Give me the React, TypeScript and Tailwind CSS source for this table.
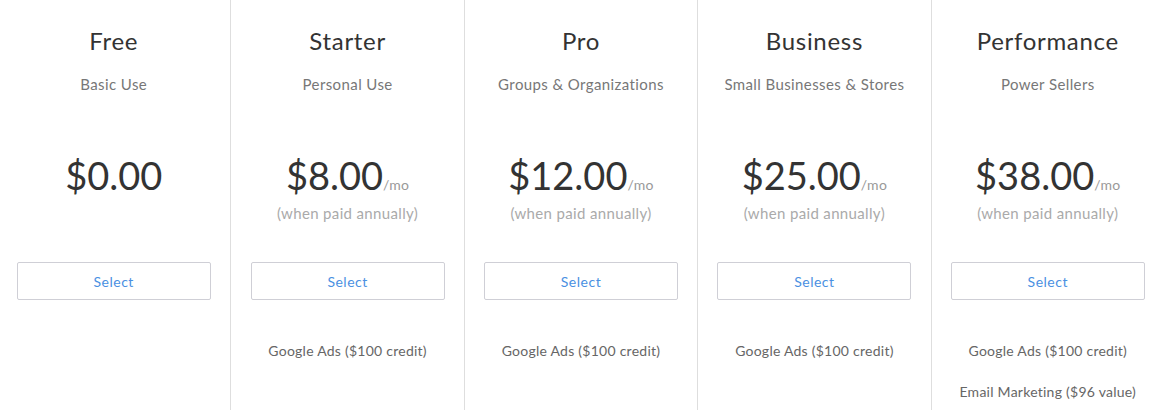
import React from 'react';

interface Plan {
  name: string;
  tagline: string;
  price: string;
  monthly: boolean;
  features: string[];
}

const plans: Plan[] = [
  { name: 'Free', tagline: 'Basic Use', price: '$0.00', monthly: false, features: [] },
  { name: 'Starter', tagline: 'Personal Use', price: '$8.00', monthly: true, features: ['Google Ads ($100 credit)'] },
  { name: 'Pro', tagline: 'Groups & Organizations', price: '$12.00', monthly: true, features: ['Google Ads ($100 credit)'] },
  { name: 'Business', tagline: 'Small Businesses & Stores', price: '$25.00', monthly: true, features: ['Google Ads ($100 credit)'] },
  {
    name: 'Performance',
    tagline: 'Power Sellers',
    price: '$38.00',
    monthly: true,
    features: ['Google Ads ($100 credit)', 'Email Marketing ($96 value)'],
  },
];

export default function App() {
  return (
    <div
      className="h-[410px] w-[1160px] overflow-hidden bg-white"
      style={{ fontFamily: 'Lato, "Open Sans", sans-serif' }}
    >
      <div className="ml-[-3px] grid w-[1167px] grid-cols-5">
        {plans.map((plan, i) => (
          <div
            key={plan.name}
            className={
              i === 0
                ? 'flex h-[410px] flex-col items-center px-[20px] pt-[27px]'
                : 'flex h-[410px] flex-col items-center border-l border-[#dedede] px-[20px] pt-[27px]'
            }
          >
            <h2 className="text-[24px] leading-[28px] tracking-[0.7px] text-[#333]">{plan.name}</h2>
            <p className="mt-[19px] text-[15px] leading-[20px] tracking-[0.4px] text-[#777]">{plan.tagline}</p>

            <div className="mt-[57px] flex h-[72px] flex-col items-center">
              <div className="flex items-baseline">
                <span className="text-[38px] leading-[48px] text-[#333]">{plan.price}</span>
                {plan.monthly && <span className="text-[14px] tracking-[0.3px] text-[#999]">/mo</span>}
              </div>
              {plan.monthly && (
                <p className="mt-[4px] text-[15px] leading-[20px] tracking-[0.35px] text-[#aaa]">
                  (when paid annually)
                </p>
              )}
            </div>

            <button className="mt-[39px] h-[38px] w-[194px] rounded-[2px] border border-[#cfcfd6] text-[14px] tracking-[0.5px] text-[#4a90e2]">
              Select
            </button>

            <div className="mt-[41px] flex flex-col items-center gap-[21px]">
              {plan.features.map((f) => (
                <p key={f} className="text-[14px] leading-[20px] tracking-[0.25px] text-[#666]">
                  {f}
                </p>
              ))}
            </div>
          </div>
        ))}
      </div>
    </div>
  );
}
